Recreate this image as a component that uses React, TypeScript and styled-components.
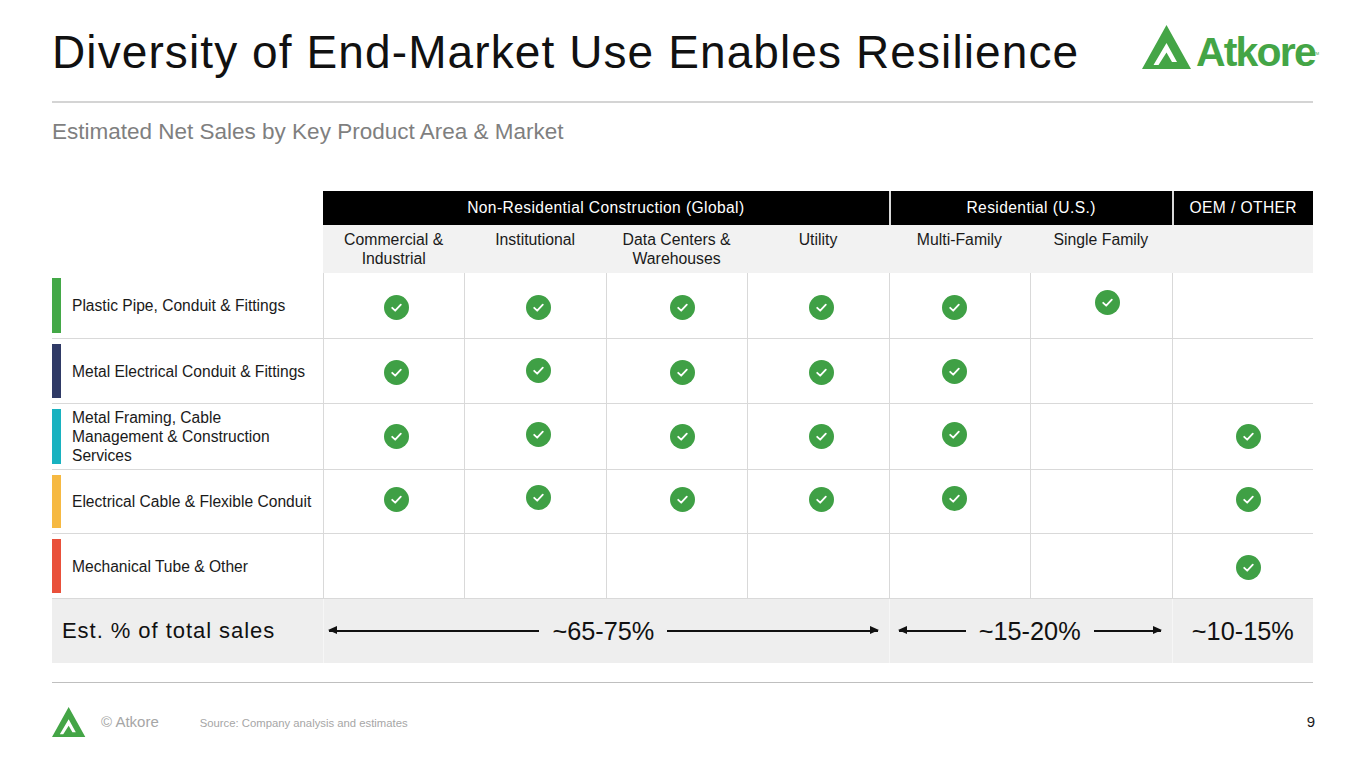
import React from 'react';
import styled, { createGlobalStyle } from 'styled-components';

const GlobalStyle = createGlobalStyle`
  html, body {
    margin: 0;
    padding: 0;
    background: #fff;
  }
  body {
    font-family: 'Liberation Sans', Arial, sans-serif;
    color: #1a1a1a;
  }
`;

const GREEN = '#44a546';

const Page = styled.div`
  width: 1365px;
  height: 768px;
  box-sizing: border-box;
  padding: 0 52px;
  display: flex;
  flex-direction: column;
  overflow: hidden;
`;

const Header = styled.header`
  height: 101px;
  display: flex;
  align-items: center;
  justify-content: space-between;
  border-bottom: 2px solid #d4d4d4;
  box-sizing: content-box;
`;

const Title = styled.h1`
  margin: 0;
  padding-top: 2px;
  font-size: 46px;
  font-weight: 400;
  letter-spacing: 1.1px;
  color: #111;
`;

const LogoWrap = styled.div`
  display: flex;
  align-items: flex-end;
  gap: 4px;
  margin-top: -7px;
  margin-right: -2px;
`;

const LogoText = styled.span`
  font-size: 41px;
  font-weight: 700;
  letter-spacing: -1.8px;
  color: ${GREEN};
  line-height: 34px;
  position: relative;
`;

const Tm = styled.sup`
  position: absolute;
  top: 2px;
  right: -4px;
  font-size: 4px;
  letter-spacing: 0;
  font-weight: 400;
`;

const Subtitle = styled.h2`
  margin: 17px 0 0;
  font-size: 22.5px;
  line-height: 24px;
  font-weight: 400;
  color: #7f7f7f;
`;

const Table = styled.div`
  margin-top: 47px;
  display: grid;
  grid-template-columns: 271px repeat(7, 1fr);
`;

const Blank = styled.div``;

const GroupCell = styled.div<{ $span: number; $first?: boolean }>`
  grid-column: span ${(p) => p.$span};
  height: 34px;
  background: #000;
  color: #fff;
  font-size: 15.6px;
  letter-spacing: 0.4px;
  display: flex;
  align-items: center;
  justify-content: center;
  border-left: ${(p) => (p.$first ? 'none' : '2px solid #d9d9d9')};
`;

const SubHead = styled.div`
  height: 48px;
  background: #f2f2f2;
  font-size: 15.8px;
  line-height: 19px;
  text-align: center;
  padding-top: 5px;
  box-sizing: border-box;
  color: #1a1a1a;
`;

const LabelCell = styled.div<{ $h: number }>`
  height: ${(p) => p.$h}px;
  display: flex;
  align-items: stretch;
  gap: 11px;
  padding: 5px 0;
  box-sizing: border-box;
  border-bottom: 1px solid #d9d9d9;
`;

const ColorBar = styled.div<{ $color: string }>`
  width: 9px;
  flex: none;
  background: ${(p) => p.$color};
`;

const LabelText = styled.div`
  align-self: center;
  font-size: 15.6px;
  line-height: 19px;
  color: #1a1a1a;
  white-space: nowrap;
`;

const DataCell = styled.div<{ $h: number; $dx: number; $dy: number }>`
  height: ${(p) => p.$h}px;
  display: flex;
  align-items: center;
  justify-content: center;
  box-sizing: border-box;
  border-left: 1px solid #d9d9d9;
  border-bottom: 1px solid #d9d9d9;
  padding-left: ${(p) => Math.max(0, p.$dx * 2)}px;
  padding-right: ${(p) => Math.max(0, -p.$dx * 2)}px;
  padding-top: ${(p) => Math.max(0, p.$dy * 2)}px;
  padding-bottom: ${(p) => Math.max(0, -p.$dy * 2)}px;
`;

const TotalLabel = styled.div`
  height: 64px;
  background: #eeeeee;
  display: flex;
  align-items: center;
  padding-left: 10px;
  font-size: 22px;
  letter-spacing: 0.95px;
  color: #111;
`;

const TotalCell = styled.div<{ $span: number; $pl: number; $pr: number }>`
  grid-column: span ${(p) => p.$span};
  height: 64px;
  background: #eeeeee;
  border-left: 1px solid #f6f6f6;
  display: flex;
  align-items: center;
  justify-content: center;
  gap: 13px;
  padding: 0 ${(p) => p.$pr}px 0 ${(p) => p.$pl}px;
  box-sizing: border-box;
`;

const Pct = styled.span`
  font-size: 25.3px;
  color: #111;
  white-space: nowrap;
`;

const ArrowLine = styled.div<{ $dir: 'left' | 'right' }>`
  flex: 1;
  height: 1.5px;
  background: #111;
  position: relative;

  &::after {
    content: '';
    position: absolute;
    top: -4px;
    ${(p) => (p.$dir === 'left' ? 'left: -1px;' : 'right: -1px;')}
    border-top: 4.5px solid transparent;
    border-bottom: 4.5px solid transparent;
    ${(p) =>
      p.$dir === 'left' ? 'border-right: 9px solid #111;' : 'border-left: 9px solid #111;'}
  }
`;

const Footer = styled.footer`
  margin-top: 19px;
  border-top: 1px solid #bfbfbf;
  display: flex;
  align-items: center;
  padding-top: 24px;
`;

const Copy = styled.span`
  margin-left: 15px;
  font-size: 15px;
  color: #a6a6a6;
`;

const Source = styled.span`
  margin-left: 41px;
  margin-top: 2px;
  font-size: 11.3px;
  color: #a6a6a6;
`;

const PageNum = styled.span`
  margin-left: auto;
  margin-right: -2px;
  font-size: 15px;
  color: #1a1a1a;
`;

function Mark({ size }: { size: number }): JSX.Element {
  const h = size * 0.88;
  return (
    <svg width={size} height={h} viewBox='0 0 50 44'>
      <path
        fillRule='evenodd'
        fill={GREEN}
        d='M0 44 L24.5 0 L49 44 Z M11.5 40 L24.5 18 L35 37 L30 37 L24.5 27.5 L16.5 40 Z'
      />
    </svg>
  );
}

function Check(): JSX.Element {
  return (
    <svg width='25' height='25' viewBox='0 0 25 25'>
      <circle cx='12.5' cy='12.5' r='12.5' fill='#3fa045' />
      <path
        d='M8.2 12.8 L11.2 15.7 L16.8 9.6'
        fill='none'
        stroke='#fff'
        strokeWidth='1.8'
        strokeLinecap='round'
        strokeLinejoin='round'
      />
    </svg>
  );
}

const subHeads = [
  ['Commercial &', 'Industrial'],
  ['Institutional'],
  ['Data Centers &', 'Warehouses'],
  ['Utility'],
  ['Multi-Family'],
  ['Single Family'],
  [],
];

// horizontal nudge of the check in each column
const colDx = [2, 3, 5, 3, -5, 6, 6];

const rows = [
  {
    label: ['Plastic Pipe, Conduit & Fittings'],
    color: '#43a847',
    h: 66,
    marks: [1, 1, 1, 1, 1, 1, 0],
    dy: [2, 2, 2, 2, 2, -3, 0],
  },
  {
    label: ['Metal Electrical Conduit & Fittings'],
    color: '#2f3a66',
    h: 65,
    marks: [1, 1, 1, 1, 1, 0, 0],
    dy: [1, -1, 1, 1, 0, 0, 0],
  },
  {
    label: ['Metal Framing, Cable', 'Management & Construction', 'Services'],
    color: '#18b2c0',
    h: 66,
    marks: [1, 1, 1, 1, 1, 0, 1],
    dy: [0, -2, 0, 0, -2, 0, 0],
  },
  {
    label: ['Electrical Cable & Flexible Conduit'],
    color: '#f6b942',
    h: 64,
    marks: [1, 1, 1, 1, 1, 0, 1],
    dy: [-2, -4, -2, -2, -3, 0, -2],
  },
  {
    label: ['Mechanical Tube & Other'],
    color: '#e9503a',
    h: 65,
    marks: [0, 0, 0, 0, 0, 0, 1],
    dy: [0, 0, 0, 0, 0, 0, 1],
  },
];

export default function App(): JSX.Element {
  return (
    <>
      <GlobalStyle />
      <Page>
        <Header>
          <Title>Diversity of End-Market Use Enables Resilience</Title>
          <LogoWrap>
            <Mark size={50} />
            <LogoText>
              Atkore
              <Tm>TM</Tm>
            </LogoText>
          </LogoWrap>
        </Header>
        <Subtitle>Estimated Net Sales by Key Product Area &amp; Market</Subtitle>

        <Table>
          <Blank />
          <GroupCell $span={4} $first>
            Non-Residential Construction (Global)
          </GroupCell>
          <GroupCell $span={2}>Residential (U.S.)</GroupCell>
          <GroupCell $span={1}>OEM / OTHER</GroupCell>

          <Blank />
          {subHeads.map((lines, i) => (
            <SubHead key={`sh-${i}`}>
              {lines.map((l) => (
                <div key={l}>{l}</div>
              ))}
            </SubHead>
          ))}

          {rows.map((r) => (
            <React.Fragment key={r.label[0]}>
              <LabelCell $h={r.h}>
                <ColorBar $color={r.color} />
                <LabelText>
                  {r.label.map((l) => (
                    <div key={l}>{l}</div>
                  ))}
                </LabelText>
              </LabelCell>
              {r.marks.map((m, i) => (
                <DataCell key={`${r.label[0]}-${i}`} $h={r.h} $dx={colDx[i]} $dy={r.dy[i]}>
                  {m ? <Check /> : null}
                </DataCell>
              ))}
            </React.Fragment>
          ))}

          <TotalLabel>Est. % of total sales</TotalLabel>
          <TotalCell $span={4} $pl={5} $pr={11}>
            <ArrowLine $dir='left' />
            <Pct>~65-75%</Pct>
            <ArrowLine $dir='right' />
          </TotalCell>
          <TotalCell $span={2} $pl={9} $pr={11}>
            <ArrowLine $dir='left' />
            <Pct>~15-20%</Pct>
            <ArrowLine $dir='right' />
          </TotalCell>
          <TotalCell $span={1} $pl={0} $pr={0}>
            <Pct>~10-15%</Pct>
          </TotalCell>
        </Table>

        <Footer>
          <Mark size={34} />
          <Copy>© Atkore</Copy>
          <Source>Source: Company analysis and estimates</Source>
          <PageNum>9</PageNum>
        </Footer>
      </Page>
    </>
  );
}
